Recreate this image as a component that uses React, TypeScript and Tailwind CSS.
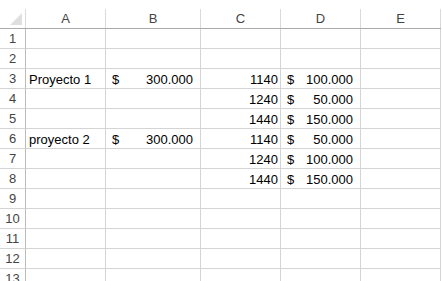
const cols = [
  { key: "A", w: "w-[80px]" },
  { key: "B", w: "w-[95px]" },
  { key: "C", w: "w-[80px]" },
  { key: "D", w: "w-[80px]" },
  { key: "E", w: "w-[80px]" },
];

type Row = {
  a?: string;
  b?: string;
  c?: string;
  d?: string;
};

const rows: Row[] = [
  {},
  {},
  { a: "Proyecto 1", b: "300.000", c: "1140", d: "100.000" },
  { c: "1240", d: "50.000" },
  { c: "1440", d: "150.000" },
  { a: "proyecto 2", b: "300.000", c: "1140", d: "50.000" },
  { c: "1240", d: "100.000" },
  { c: "1440", d: "150.000" },
  {},
  {},
  {},
  {},
  {},
];

function Money({ value }: { value?: string }) {
  if (!value) return null;
  return (
    <div className="flex h-full w-full items-center justify-between pl-[6px] pr-[7px] pt-[2px]">
      <span>$</span>
      <span>{value}</span>
    </div>
  );
}

export default function App() {
  return (
    <div
      className="h-[281px] w-[442px] overflow-hidden bg-white pt-[9px] text-[13px] text-black"
      style={{ fontFamily: '"Liberation Sans", Arial, sans-serif' }}
    >
      <div className="flex h-[20px] w-[441px] border-b border-[#ababab]">
        <div className="relative h-full w-[26px] border-r border-[#dadada]">
          <div className="absolute bottom-[3px] right-[3px] h-0 w-0 border-b-[12px] border-l-[12px] border-b-[#dfdfdf] border-l-transparent" />
        </div>
        {cols.map((col) => (
          <div
            key={col.key}
            className={`${col.w} flex h-full items-center justify-center border-r border-[#dadada] text-[#444]`}
          >
            {col.key}
          </div>
        ))}
      </div>

      {rows.map((row, i) => (
        <div key={i} className="flex h-[20px] w-[441px] shrink-0">
          <div className="flex h-full w-[26px] items-center justify-center border-b border-r border-b-[#d4d4d4] border-r-[#bcbcbc] pt-[1px] text-[#444]">
            {i + 1}
          </div>
          <div className="flex h-full w-[80px] items-center border-b border-r border-[#d4d4d4] pl-[3px] pt-[2px]">
            {row.a}
          </div>
          <div className="h-full w-[95px] border-b border-r border-[#d4d4d4]">
            <Money value={row.b} />
          </div>
          <div className="flex h-full w-[80px] items-center justify-end border-b border-r border-[#d4d4d4] pr-[2px] pt-[2px]">
            {row.c}
          </div>
          <div className="h-full w-[80px] border-b border-r border-[#d4d4d4]">
            <Money value={row.d} />
          </div>
          <div className="h-full w-[80px] border-b border-r border-[#d4d4d4]" />
        </div>
      ))}
    </div>
  );
}
